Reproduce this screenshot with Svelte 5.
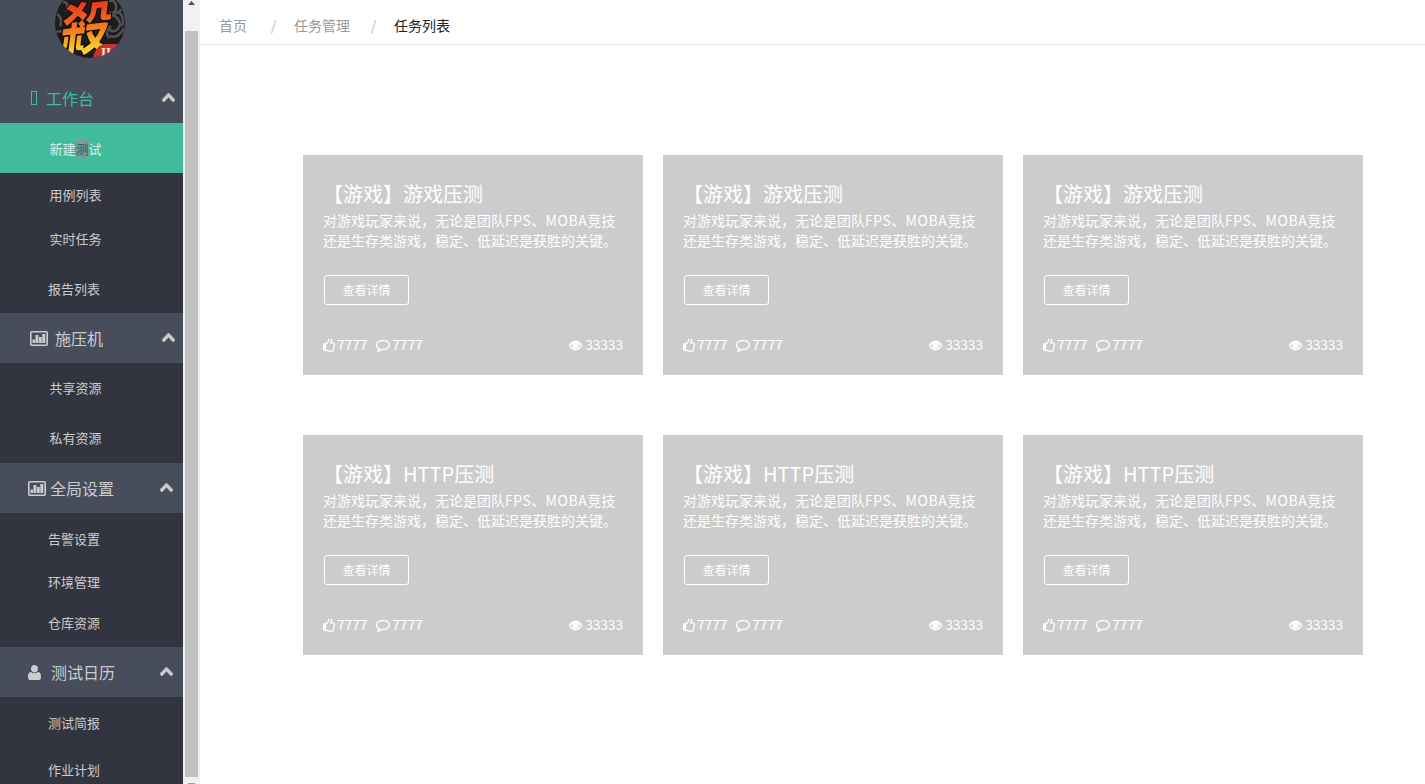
<script>
  const groups = [
    { label: '工作台', icon: 'blank', x: 29, gap: 8, right: 8, on: true, items: [
      { t: '新建测试', x: 49.5, h: 50, pad: 1, active: true },
      { t: '用例列表', x: 49.5, h: 44 },
      { t: '实时任务', x: 49.5, h: 44 },
      { t: '报告列表', x: 48, h: 52, pad: 4 } ] },
    { label: '施压机', icon: 'chart', x: 30, gap: 7, right: 8, items: [
      { t: '共享资源', x: 49.5, h: 50 },
      { t: '私有资源', x: 49.5, h: 50 } ] },
    { label: '全局设置', icon: 'chart', x: 28, gap: 4, right: 10, items: [
      { t: '告警设置', x: 48, h: 51 },
      { t: '环境管理', x: 48, h: 35 },
      { t: '仓库资源', x: 48, h: 48 } ] },
    { label: '测试日历', icon: 'user', x: 28, gap: 10, right: 10, items: [
      { t: '测试简报', x: 48, h: 51 },
      { t: '作业计划', x: 48, h: 43 } ] }
  ];
  const cards = ['游戏压测', '游戏压测', '游戏压测', 'HTTP压测', 'HTTP压测', 'HTTP压测'];
</script>

<div class="page">
  <aside>
    <div class="brand">
      <svg width="70" height="58" viewBox="0 12 70 58">
        <defs>
          <linearGradient id="fire" x1="0" y1="0" x2="0" y2="1">
            <stop offset="0.2" stop-color="#e8301f" />
            <stop offset="0.4" stop-color="#ee5a20" />
            <stop offset="0.6" stop-color="#f58a22" />
            <stop offset="0.8" stop-color="#fbd52c" />
            <stop offset="1" stop-color="#ffee3a" />
          </linearGradient>
          <clipPath id="round"><circle cx="35" cy="35" r="35" /></clipPath>
        </defs>
        <g clip-path="url(#round)">
          <rect width="70" height="70" fill="#1c1c1c" />
          <g fill="none" stroke="#505050" stroke-width="2.600">
            <path d="M52 14q8-4 9 4t-7 7q9 2 12-4M50 30q8-6 13 1t-3 12q-7 1-5-5M55 48q8 3 14-8M64 24q6 6 3 14M2 26q6 4 3 12M1 44q8-3 9 5t7 8M8 14q7 0 3 9M46 8q6 1 12 1M56 38q-7 5-2 12" />
          </g>
          <text class="sigil" font-size="54" fill="url(#fire)" stroke="#160d08" stroke-width="2.400" paint-order="stroke" transform="matrix(.93 -.1 -.14 1.080 3 65)">殺</text>
          <path d="M38 70q3-14 13-14h19v14z" fill="#c93232" />
          <text x="46" y="68" class="roman">II</text>
        </g>
      </svg>
    </div>
    {#each groups as g}
      <div class="head" class:on={g.on} style="padding-left:{g.x}px;padding-right:{g.right}px">
        {#if g.icon === 'blank'}
          <svg width="9" height="15" viewBox="0 0 9 15"><rect x="2.500" y=".5" width="5" height="13" fill="none" stroke="currentColor" /></svg>
        {:else if g.icon === 'chart'}
          <svg width="18" height="15" viewBox="0 0 18 15"><rect x=".8" y=".8" width="16.400" height="13.400" rx="1" fill="none" stroke="currentColor" stroke-width="1.600" /><path fill="currentColor" d="M2.500 8.500h2.500V12H2.500zM5.500 4h2.900v8H5.500zM9 6h2.800v6H9zM12.300 3h3v9h-3z" /></svg>
        {:else}
          <svg width="13" height="15" viewBox="192 128 1408 1536" preserveAspectRatio="none"><path fill="currentColor" d="M1600 1399q0 109-62.500 187t-150.500 78H405q-88 0-150.500-78T192 1399q0-85 8.500-160.500t31.500-152 58.500-131 94-89T519 832q131 128 377 128t377-128q76 0 134.500 34.500t94 89 58.500 131 31.500 152 8.500 160.500zM1280 512q0 159-112.500 271.500T896 896 624.500 783.500 512 512t112.500-271.500T896 128t271.500 112.500T1280 512z" /></svg>
        {/if}
        <span style="margin-left:{g.gap}px">{g.label}</span>
        <svg class="chev" width="13" height="9" viewBox="90 480 1612 1035" preserveAspectRatio="none"><path fill="currentColor" stroke="currentColor" stroke-width="60" d="M1683 1331l-166 165q-19 19-45 19t-45-19L896 965l-531 531q-19 19-45 19t-45-19l-166-165q-19-19-19-45.500t19-45.500l742-741q19-19 45-19t45 19l742 741q19 19 19 45.500t-19 45.500z" /></svg>
      </div>
      {#each g.items as i}
        <div class="item" class:active={i.active} style="height:{i.h}px;padding-left:{i.x}px;padding-top:{i.pad ?? 0}px">
          {#if i.active}<span>新建<mark>测</mark>试</span>{:else}<span>{i.t}</span>{/if}
        </div>
      {/each}
    {/each}
  </aside>
  <div class="bar">
    <svg width="7" height="4" viewBox="0 0 7 4"><path d="M0 4L3.500 0 7 4z" fill="#505050" /></svg>
    <div class="thumb"></div>
    <div class="down"></div>
  </div>
  <main>
    <nav><span>首页</span><i>/</i><span>任务管理</span><i>/</i><b>任务列表</b></nav>
    <section>
      {#each cards as c}
        <article>
          <h3>【游戏】{c}</h3>
          <p>对游戏玩家来说，无论是团队<span class="lat">FPS</span>、<span class="lat">MOBA</span>竞技<br />还是生存类游戏，稳定、低延迟是获胜的关键。</p>
          <button>查看详情</button>
          <footer>
            <svg width="12" height="13" viewBox="128 128 1536 1536" preserveAspectRatio="none"><path fill="currentColor" stroke="currentColor" stroke-width="50" d="M384 1344q0-26-19-45t-45-19-45 19-19 45 19 45 45 19 45-19 19-45zm1152-576q0-51-39-89.500t-89-38.500h-352q0-58 48-159.500t48-160.500q0-98-32-145t-128-47q-26 26-38 85t-30.500 125.500-59.500 109.500q-22 23-77 91-4 5-23 30t-31.500 41-34.500 42.500-40 44-38.500 35.500-40 27-35.500 9h-32v640h32q13 0 31.500 3t33 6.500 38 11 35 11.500 35.500 12.500 29 10.500q211 73 342 73h121q192 0 192-167 0-26-5-56 30-16 47.500-52.500t17.500-73.500-18-69q53-50 53-119 0-25-10-55.500t-25-47.500q32-1 53.500-47t21.500-81zm128-1q0 89-49 163 9 33 9 69 0 77-38 144 3 21 3 43 0 101-60 178 1 139-85 219.500t-227 80.500h-129q-96 0-189.500-22.500t-216.500-65.500q-116-40-138-40h-288q-53 0-90.500-37.500t-37.500-90.500v-640q0-53 37.500-90.500t90.500-37.500h274q36-24 137-155 58-75 107-128 24-25 35.500-85.500t30.500-126.500 62-108q39-37 90-37 84 0 151 32.500t102 101.500 35 186q0 93-48 192h176q104 0 180 76t76 179z" /></svg>
            <span class="num">7777</span>
            <svg class="say" width="14" height="14" viewBox="0 0 1792 1792"><path fill="currentColor" stroke="currentColor" stroke-width="60" d="M896 384q-204 0-381.500 69.500t-282 187.500-104.500 255q0 112 71.500 213.500t201.500 175.500l87 50-27 96q-24 91-70 172 152-63 275-171l43-38 57 6q69 8 130 8 204 0 381.500-69.500t282-187.500 104.500-255-104.500-255-282-187.500-381.500-69.500zm896 512q0 174-120 321.500t-326 233-450 85.500q-70 0-145-8-198 175-460 242-49 14-114 22h-5q-15 0-27-10.500t-16-27.500v-1q-3-4-.5-12t2-10 4.500-9.500l6-9 7-8.500 8-9q7-8 31-34.500t34.500-38 31-39.500 32.500-51 27-59 26-76q-157-89-247.500-220t-90.500-281q0-174 120-321.500t326-233 450-85.500 450 85.500 326 233 120 321.500z" /></svg>
            <span class="num">7777</span>
            <svg class="eye" width="13" height="14" viewBox="0 0 1792 1792" preserveAspectRatio="none"><path fill="currentColor" stroke="currentColor" stroke-width="110" d="M1664 960q-152-236-381-353 61 104 61 225 0 185-131.500 316.500t-316.500 131.500-316.500-131.500-131.500-316.500q0-121 61-225-229 117-381 353 133 205 333.500 326.500t434.500 121.500 434.500-121.500 333.500-326.500zm-720-384q0-20-14-34t-34-14q-125 0-214.500 89.500t-89.500 214.500q0 20 14 34t34 14 34-14 14-34q0-86 61-147t147-61q20 0 34-14t14-34zm848 384q0 34-20 69-140 230-376.500 368.500t-499.500 138.500-499.500-139-376.500-368q-20-35-20-69t20-69q140-229 376.500-368t499.500-139 499.500 139 376.500 368q20 35 20 69z" /></svg>
            <span class="num views">33333</span>
          </footer>
        </article>
      {/each}
    </section>
  </main>
</div>

<style>
  :global(body) { overflow: hidden; }
  .page { display: flex; height: 784px; overflow: hidden; background: #fff; font-family: "Noto Sans CJK SC", sans-serif; }
  svg { display: block; flex: none; }
  aside { width: 183px; height: 784px; overflow: hidden; background: #32343f; color: #ccc; flex: none; }
  .brand { height: 73px; background: #474d5a; padding-left: 55px; box-sizing: border-box; }
  .sigil { font-family: "Noto Sans CJK TC", sans-serif; font-weight: 700; }
  .roman { font: bold 13px "Liberation Serif", serif; fill: #fff0d0; }
  .head { display: flex; align-items: center; height: 50px; box-sizing: border-box; background: #474d5a; font-size: 16px; line-height: 24px; white-space: nowrap; }
  .head.on { color: #43bb9c; }
  .chev { margin-left: auto; color: #ccc; position: relative; top: -1px; }
  .item { display: flex; align-items: center; box-sizing: border-box; font-size: 13px; line-height: 18px; }
  .active { background: #42bb9c; color: #d9f1eb; }
  .active span { display: flex; }
  mark { background: #7b9f96; color: #31545a; height: 17px; line-height: 18px; }
  .bar { width: 17px; height: 784px; flex: none; background: #f1f1f1; display: flex; flex-direction: column; align-items: center; box-sizing: border-box; padding: 1px 2px 0; }
  .bar svg { margin-left: -1px; }
  .thumb { width: 13px; height: 746px; margin-top: 26px; background: #c1c1c1; }
  .down { width: 7px; height: 1px; margin-top: 6px; background: #a3a3a3; }
  main { flex: 1; min-width: 0; }
  nav { display: flex; align-items: center; height: 45px; box-sizing: border-box; padding: 5px 0 0 19px; border-bottom: 1px solid #e6e6e6; font-size: 14px; line-height: 20px; color: #999; }
  nav i { font-style: normal; width: 47px; text-align: center; color: #bbb; box-sizing: border-box; padding-left: 6px; }
  nav i + span + i { width: 44px; padding-left: 3px; }
  nav b { font-weight: 400; color: #222; }
  section { display: grid; grid-template-columns: repeat(3, 340px); gap: 60px 20px; padding: 110px 0 0 103px; }
  article { height: 220px; box-sizing: border-box; padding: 28px 20px 0; background: #ccc; color: #fff; }
  h3 { margin: 0; font-size: 20px; line-height: 22px; font-weight: 400; white-space: nowrap; }
  p { margin: 5px 0 0; font-size: 14px; line-height: 20px; height: 41px; white-space: nowrap; }
  .lat { letter-spacing: 0.58px; }
  button { display: block; width: 85px; height: 30px; margin: 24px 0 0 1px; padding: 0; border: 1px solid #fff; border-radius: 3px; background: none; color: #fff; font: 12px/26px "Noto Sans CJK SC", sans-serif; }
  footer { display: flex; align-items: center; margin-top: 30px; height: 20px; font-size: 14px; line-height: 20px; }
  .num { margin-left: 2px; letter-spacing: -0.2px; position: relative; top: -1px; }
  .views { margin-left: 3px; }
  .say { margin-left: 9px; }
  .eye { margin-left: auto; }
</style>
